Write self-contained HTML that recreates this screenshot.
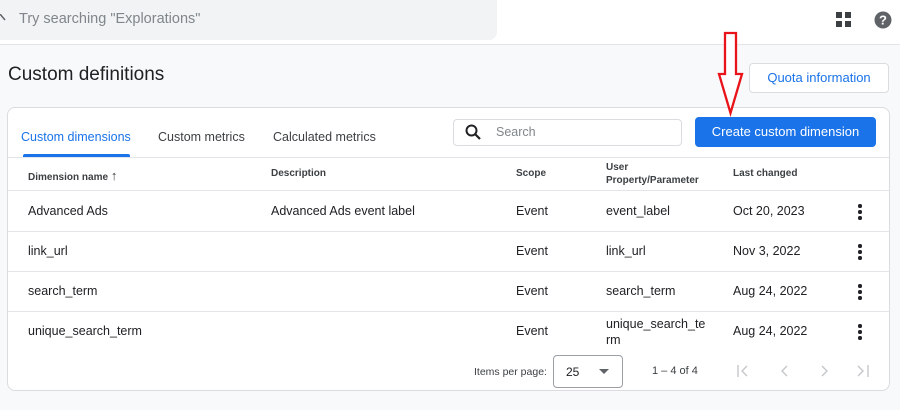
<!DOCTYPE html>
<html><head><style>
*{margin:0;padding:0;box-sizing:border-box}
body{width:900px;height:410px;background:#f8f9fa;font-family:"Liberation Sans",sans-serif;position:relative;overflow:hidden;color:#202124}
.abs{position:absolute}
.top{left:0;top:0;width:900px;height:45px;background:#fff;border-bottom:1px solid #e3e5e8}
.sf{left:0;top:0;width:497px;height:40px;background:#f1f3f4;border-radius:0 0 8px 0}
.card{left:7px;top:107px;width:883px;height:284px;background:#fff;border:1px solid #dadce0;border-radius:8px}
.t{font-size:12.5px;white-space:nowrap}
.row{left:8px;width:881px;height:1px;background:#e3e5e8}
.h{font-size:10px;font-weight:bold;color:#3c4043}
.dots{width:4px}
.dots i{display:block;width:3.5px;height:3.5px;border-radius:50%;background:#202124;margin-bottom:2.5px}
</style></head><body>
<div class="abs top"></div>
<div class="abs sf"></div>
<svg class="abs" style="left:0;top:14px" width="6" height="8"><path d="M0 0L5 6" stroke="#5f6368" stroke-width="1.5"/></svg>
<div class="abs" style="left:19px;top:11px;font-size:14.5px;color:#80868b">Try searching "Explorations"</div>
<svg class="abs" style="left:836px;top:12px" width="16" height="16"><rect x="0" y="0" width="6" height="6" fill="#3c4043"/><rect x="9" y="0" width="6" height="6" fill="#3c4043"/><rect x="0" y="9" width="6" height="6" fill="#3c4043"/><rect x="9" y="9" width="6" height="6" fill="#3c4043"/></svg>
<svg class="abs" style="left:874px;top:11px" width="18" height="18"><circle cx="9" cy="9" r="8.5" fill="#5f6368"/><text x="9" y="13.5" text-anchor="middle" font-size="13" font-weight="bold" fill="#fff" font-family="Liberation Sans">?</text></svg>
<div class="abs" style="left:8px;top:64px;font-size:19px;color:#202124">Custom definitions</div>
<div class="abs" style="left:749px;top:63px;width:140px;height:30px;background:#fff;border:1px solid #dadce0;border-radius:4px;color:#1a73e8;font-size:13px;text-align:center;line-height:28px">Quota information</div>
<div class="abs card"></div>
<div class="abs t" style="left:21px;top:130px;color:#1a73e8">Custom dimensions</div>
<div class="abs" style="left:23px;top:154px;width:107px;height:3px;background:#1a73e8;border-radius:2px 2px 0 0"></div>
<div class="abs t" style="left:158px;top:130px;color:#3c4043">Custom metrics</div>
<div class="abs t" style="left:273px;top:130px;color:#3c4043">Calculated metrics</div>
<div class="abs" style="left:453px;top:119px;width:229px;height:27px;border:1px solid #dadce0;border-radius:4px"></div>
<svg class="abs" style="left:465px;top:124px" width="16" height="16"><circle cx="6.5" cy="6.5" r="5" fill="none" stroke="#202124" stroke-width="2"/><line x1="10" y1="10" x2="15" y2="15" stroke="#202124" stroke-width="2.2"/></svg>
<div class="abs t" style="left:496px;top:125px;color:#80868b">Search</div>
<div class="abs" style="left:695px;top:117px;width:181px;height:30px;background:#1a73e8;border-radius:4px;color:#fff;font-size:13px;text-align:center;line-height:30px">Create custom dimension</div>
<div class="abs row" style="top:157px"></div>
<div class="abs h" style="left:28px;top:168px">Dimension name <span style="font-weight:normal;font-size:13px">↑</span></div>
<div class="abs h" style="left:271px;top:168px">Description</div>
<div class="abs h" style="left:516px;top:168px">Scope</div>
<div class="abs h" style="left:606px;top:161px;line-height:13px">User<br>Property/Parameter</div>
<div class="abs h" style="left:733px;top:168px">Last changed</div>
<div class="abs row" style="top:190px"></div>
<div class="abs row" style="top:231px"></div>
<div class="abs row" style="top:271px"></div>
<div class="abs row" style="top:311px"></div>
<div class="abs t" style="left:28px;top:204px">Advanced Ads</div>
<div class="abs t" style="left:271px;top:204px">Advanced Ads event label</div>
<div class="abs t" style="left:516px;top:204px">Event</div>
<div class="abs t" style="left:606px;top:204px">event_label</div>
<div class="abs t" style="left:733px;top:204px">Oct 20, 2023</div>
<div class="abs t" style="left:28px;top:244px">link_url</div>
<div class="abs t" style="left:516px;top:244px">Event</div>
<div class="abs t" style="left:606px;top:244px">link_url</div>
<div class="abs t" style="left:733px;top:244px">Nov 3, 2022</div>
<div class="abs t" style="left:28px;top:284px">search_term</div>
<div class="abs t" style="left:516px;top:284px">Event</div>
<div class="abs t" style="left:606px;top:284px">search_term</div>
<div class="abs t" style="left:733px;top:284px">Aug 24, 2022</div>
<div class="abs t" style="left:28px;top:324px">unique_search_term</div>
<div class="abs t" style="left:516px;top:324px">Event</div>
<div class="abs t" style="left:606px;top:316px;line-height:16px">unique_search_te<br>rm</div>
<div class="abs t" style="left:733px;top:324px">Aug 24, 2022</div>
<div class="abs dots" style="left:858px;top:204px"><i></i><i></i><i></i></div>
<div class="abs dots" style="left:858px;top:244px"><i></i><i></i><i></i></div>
<div class="abs dots" style="left:858px;top:284px"><i></i><i></i><i></i></div>
<div class="abs dots" style="left:858px;top:324px"><i></i><i></i><i></i></div>
<div class="abs" style="left:474px;top:366px;font-size:10.5px;color:#3c4043">Items per page:</div>
<div class="abs" style="left:553px;top:355px;width:70px;height:33px;border:1px solid #9aa0a6;border-radius:4px"></div>
<div class="abs" style="left:566px;top:365px;font-size:12px">25</div>
<svg class="abs" style="left:599px;top:369px" width="10" height="6"><path d="M0 0 L10 0 L5 5Z" fill="#5f6368"/></svg>
<div class="abs" style="left:652px;top:365px;font-size:11px;color:#3c4043">1 – 4 of 4</div>
<svg class="abs" style="left:735px;top:364px" width="140" height="14" fill="none" stroke="#c4c7c9" stroke-width="1.4"><path d="M3 1V13M12 2L7 7L12 12"/><path d="M52 2L47 7L52 12"/><path d="M87 2L92 7L87 12"/><path d="M123 2L128 7L123 12M133 1V13"/></svg>
<svg class="abs" style="left:715px;top:30px" width="35" height="88"><path d="M10 3H21V44H27L15.5 83L4 44H10Z" fill="#fff" stroke="#e8141a" stroke-width="2.3" stroke-linejoin="miter"/></svg>
</body></html>
